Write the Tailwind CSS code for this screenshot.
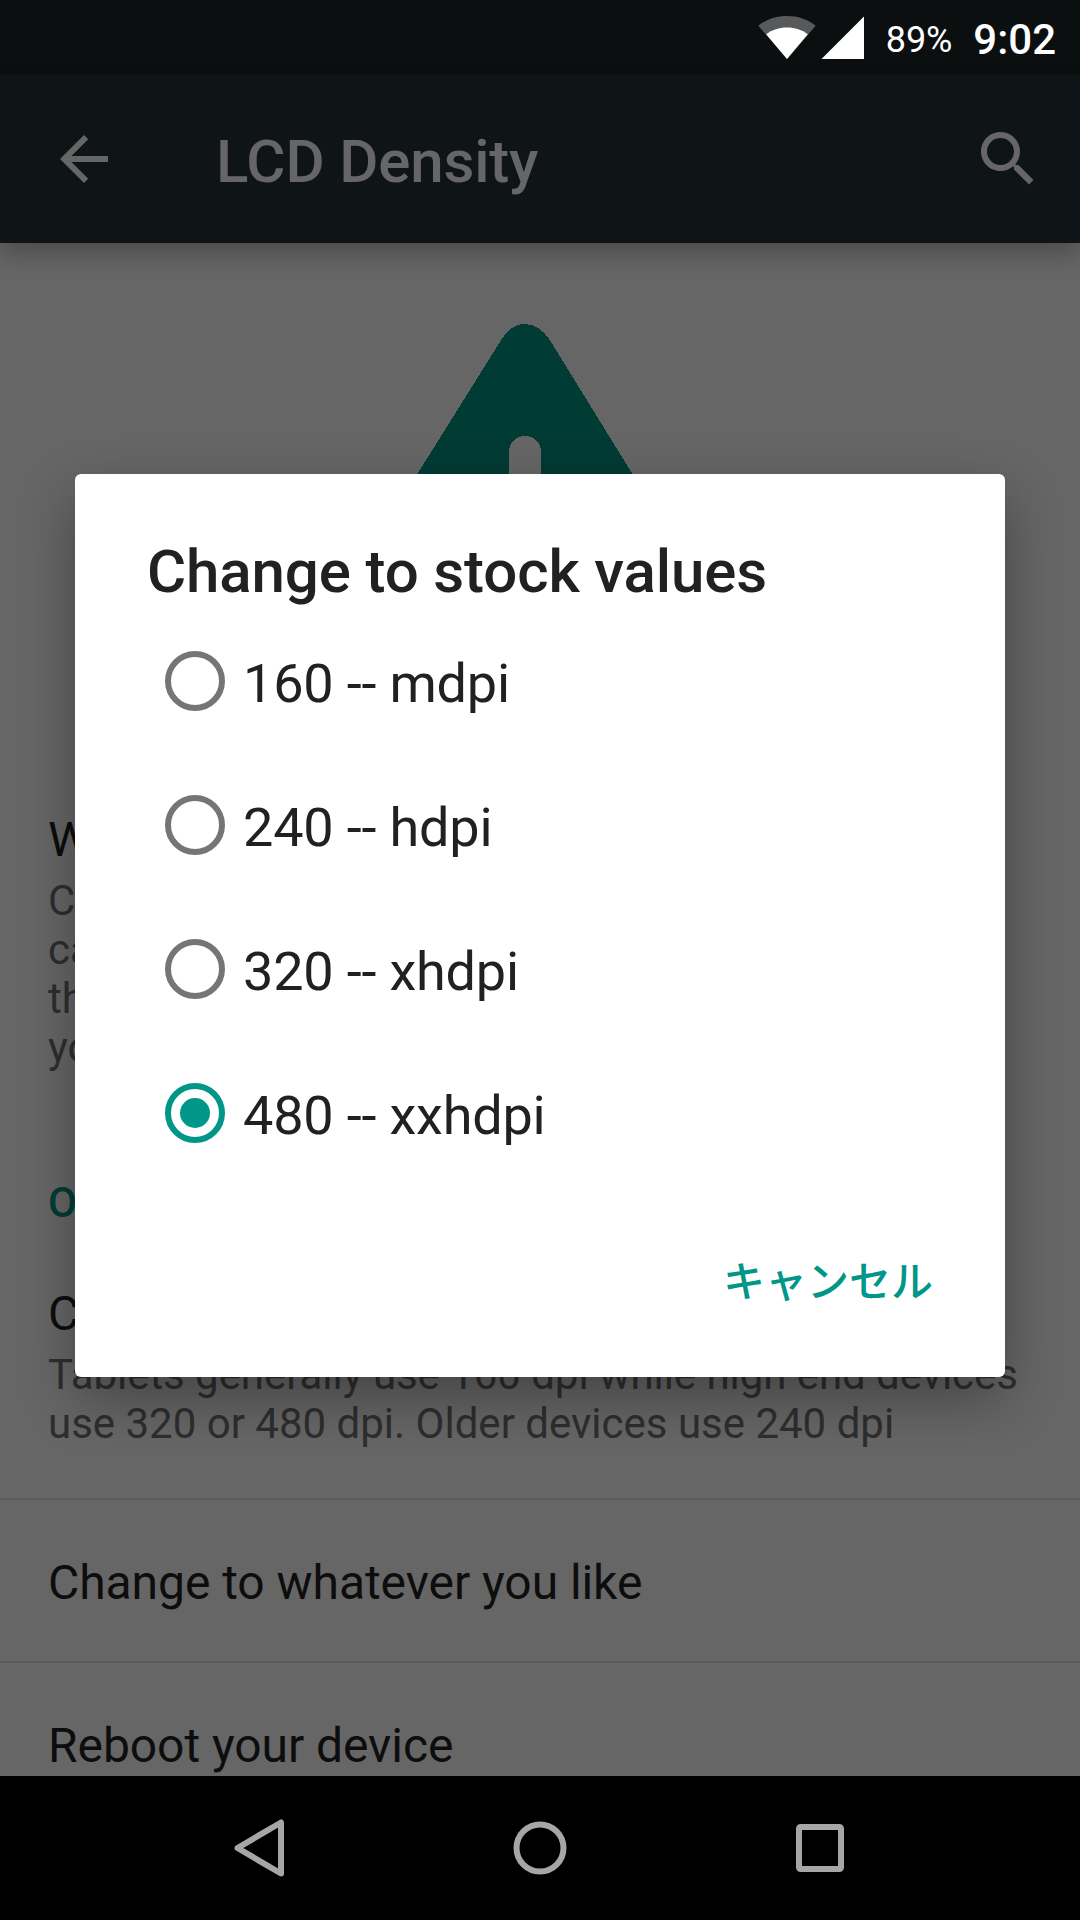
<!DOCTYPE html>
<html lang="ja">
<head>
<meta charset="utf-8">
<title>LCD Density</title>
<script src="https://cdn.jsdelivr.net/npm/@tailwindcss/browser@4"></script>
</head>
<body class="bg-black">
<div class="relative flex h-[1920px] w-[1080px] flex-col overflow-hidden bg-[#666666] font-['Roboto','Noto_Sans_CJK_JP',sans-serif]">

  <!-- Status bar -->
  <div class="z-10 flex h-[75px] shrink-0 items-start justify-end bg-[#0b0f10] pr-6 text-white">
    <svg class="mt-4 h-11 w-[58px]" viewBox="0 0 58 44">
      <path d="M0.3 9.7C8.5 3.2 18.300 0 29 0s20.500 3.200 28.700 9.700L29 43z" fill="#58595a"/>
      <path d="M8.200 18.200C14 13.700 21 11.400 29 11.400s15 2.300 20.800 6.800L29 43z" fill="#fff"/>
    </svg>
    <svg class="mt-4 ml-[5px] h-11 w-[43px]" viewBox="0 0 43 44"><path d="M43 .5V43H.5z" fill="#fff"/></svg>
    <span class="mt-[19px] ml-[22px] text-[36px] leading-[42px] tracking-[-0.1px]">89%</span>
    <span class="mt-[15px] ml-[21px] text-[42px] leading-[49px] font-medium">9:02</span>
  </div>

  <!-- App bar -->
  <div class="z-10 flex h-[168px] shrink-0 items-center bg-[#0f1416] px-12 text-[#666666] shadow-[0_10px_24px_rgba(0,0,0,0.27)]">
    <svg class="size-[72px]" viewBox="0 0 24 24" fill="currentColor"><path d="M20 11H7.830l5.590-5.590L12 4l-8 8 8 8 1.410-1.410L7.830 13H20v-2z"/></svg>
    <h1 class="mt-[5px] ml-24 flex-1 text-[60px] leading-[70px] font-medium tracking-[-0.15px]">LCD Density</h1>
    <svg class="-mr-3 size-[72px]" viewBox="0 0 24 24" fill="currentColor"><path d="M15.500 14h-.79l-.28-.27C15.410 12.590 16 11.110 16 9.500 16 5.910 13.090 3 9.500 3S3 5.910 3 9.500 5.910 16 9.500 16c1.610 0 3.090-.59 4.230-1.570l.27.28v.79l5 4.990L20.490 19l-4.990-5zm-6 0C7.010 14 5 11.990 5 9.500S7.010 5 9.500 5 14 7.010 14 9.500 11.990 14 9.500 14z"/></svg>
  </div>

  <!-- Preference list -->
  <div class="h-[1533px] shrink-0 overflow-hidden text-[#0d0d0d]">
    <div class="flex h-[569px] pt-[81px] pl-[325px]">
      <svg class="h-[260px] w-[400px]" viewBox="0 0 400 260">
        <path fill="#003b34" shape-rendering="crispEdges" fill-rule="evenodd" d="M176.500 15.500C182 6 190 0 200 0s18 6 24.500 15.500L363 240q8 20-14 20H50q-22 0-14-20zM184 184V128a16 16 0 0 1 32 0v56a16 16 0 0 1-32 0z"/>
      </svg>
    </div>
    <div class="h-[366px] px-12">
      <div class="text-[48px] leading-[56px]">Warning</div>
      <div class="mt-2 text-[42px] leading-[49px] whitespace-nowrap text-[#2e2e2e]">Changes<br>can affect<br>the way<br>you work</div>
    </div>
    <div class="h-[108px] px-12 text-[42px] leading-[49px] font-medium text-[#003d36]">Options</div>
    <div class="h-[214px] border-b-2 border-[#5b5b5b] px-12">
      <div class="text-[48px] leading-[56px]">Change</div>
      <div class="mt-2 text-[42px] leading-[49px] whitespace-nowrap text-[#2e2e2e]"><span class="tracking-[-0.05px]">Tablets generally use 160 dpi while high end devices</span><br>use 320 or 480 dpi. Older devices use 240 dpi</div>
    </div>
    <div class="h-[163px] border-b-2 border-[#5b5b5b] px-12 pt-[55px] text-[48px] leading-[56px] tracking-[-0.06px]">Change to whatever you like</div>
    <div class="px-12 pt-[55px] text-[48px] leading-[56px] tracking-[-0.06px]">Reboot your device</div>
  </div>

  <!-- Navigation bar -->
  <div class="z-10 flex h-36 shrink-0 items-center justify-between bg-black px-[224px] text-[#a6a6a6]">
    <svg class="size-[72px]" viewBox="0 0 72 72" fill="none" stroke="currentColor" stroke-width="6" stroke-linejoin="round"><path d="M57 10.500V61.500L13.500 36z"/></svg>
    <svg class="size-[72px]" viewBox="0 0 72 72" fill="none" stroke="currentColor" stroke-width="6"><circle cx="36" cy="36" r="23.500"/></svg>
    <svg class="size-[72px]" viewBox="0 0 72 72" fill="none" stroke="currentColor" stroke-width="6" stroke-linejoin="round"><rect x="15" y="15" width="42" height="42" rx="1.500"/></svg>
  </div>

  <!-- Dialog -->
  <div class="absolute top-[474px] left-[75px] flex h-[903px] w-[930px] flex-col rounded-md bg-white pt-[63px] text-[#212121] shadow-[0_22px_56px_rgba(0,0,0,0.33)]">
    <h2 class="mb-[2px] pl-[72px] text-[60px] leading-[70px] font-medium tracking-[-0.12px]">Change to stock values</h2>
    <label class="flex h-36 items-center pl-[90px] text-[54px] tracking-[-0.18px]"><span class="size-[60px] rounded-full border-6 border-[#757575]"></span><span class="mt-[5px] ml-[18px] leading-[64px]">160 -- mdpi</span></label>
    <label class="flex h-36 items-center pl-[90px] text-[54px] tracking-[-0.18px]"><span class="size-[60px] rounded-full border-6 border-[#757575]"></span><span class="mt-[5px] ml-[18px] leading-[64px]">240 -- hdpi</span></label>
    <label class="flex h-36 items-center pl-[90px] text-[54px] tracking-[-0.18px]"><span class="size-[60px] rounded-full border-6 border-[#757575]"></span><span class="mt-[5px] ml-[18px] leading-[64px]">320 -- xhdpi</span></label>
    <label class="flex h-36 items-center pl-[90px] text-[54px] tracking-[-0.18px]"><span class="flex size-[60px] items-center justify-center rounded-full border-6 border-[#009688]"><span class="size-[30px] rounded-full bg-[#009688]"></span></span><span class="mt-[5px] ml-[18px] leading-[64px]">480 -- xxhdpi</span></label>
    <div class="flex justify-end pt-[68px] pr-[72px]"><button class="text-[42px] leading-[60px] font-medium text-[#009688]">キャンセル</button></div>
  </div>
</div>
</body>
</html>
